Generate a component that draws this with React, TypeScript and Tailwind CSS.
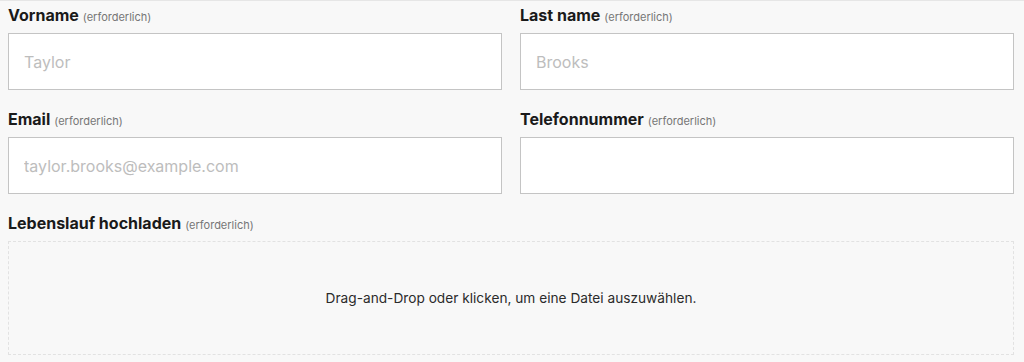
import React from "react";

function Field({ label, placeholder, type = "text" }: { label: string; placeholder?: string; type?: string }) {
  return (
    <div className="flex flex-col">
      <label className="flex items-baseline gap-1 h-6 mb-[6px] leading-6">
        <span className="text-base font-bold text-[#1a1a1a]">{label}</span>
        <span className="text-[11px] text-[#767676]">(erforderlich)</span>
      </label>
      <input
        type={type}
        placeholder={placeholder}
        className="h-[57px] w-full bg-white border border-[#c4c4c4] pl-[15px] text-base text-[#222] placeholder:text-[#bdbdbd] outline-none"
      />
    </div>
  );
}

export default function App() {
  return (
    <div
      className="min-h-screen bg-[#f8f8f8] border-t border-[#e6e6e6] pl-2 pr-[10px] pt-[2px]"
      style={{ fontFamily: "Inter, 'Noto Sans', sans-serif" }}
    >
      <form className="grid grid-cols-2 gap-x-[18px] gap-y-[17px]">
        <Field label="Vorname" placeholder="Taylor" />
        <Field label="Last name" placeholder="Brooks" />
        <Field label="Email" placeholder="taylor.brooks@example.com" type="email" />
        <Field label="Telefonnummer" type="tel" />
        <div className="col-span-2 flex flex-col">
          <label className="flex items-baseline gap-1 h-6 mb-[6px] leading-6">
            <span className="text-base font-bold text-[#1a1a1a]">Lebenslauf hochladen</span>
            <span className="text-[11px] text-[#767676]">(erforderlich)</span>
          </label>
          <div className="h-[114px] border border-dashed border-[#e2e2e2] flex items-center justify-center cursor-pointer">
            <p className="text-[13.7px] text-[#2b2b2b]">Drag-and-Drop oder klicken, um eine Datei auszuwählen.</p>
          </div>
        </div>
      </form>
    </div>
  );
}
